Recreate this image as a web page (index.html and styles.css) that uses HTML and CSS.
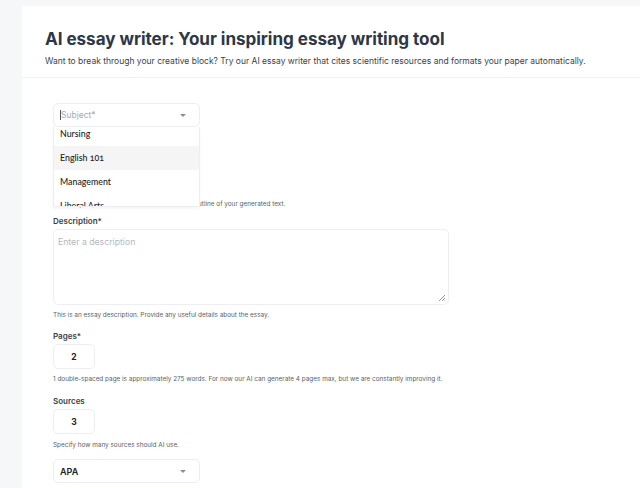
FILE: index.html
```html
<!DOCTYPE html>
<html>
<head>
<meta charset="utf-8">
<link rel="stylesheet" href="styles.css">
</head>
<body>
<div class="shell">
  <div class="topbar"></div>
  <div class="panel">
    <header class="head">
      <h1 class="title">AI essay writer: Your inspiring essay writing tool</h1>
      <p class="subtitle">Want to break through your creative block? Try our AI essay writer that cites scientific resources and formats your paper automatically.</p>
    </header>
    <form class="form">
      <div class="field subject-field">
        <div class="select">
          <span class="placeholder"><span class="caret"></span>Subject*</span>
          <span class="arrow"></span>
        </div>
        <ul class="menu">
          <li class="opt">Nursing</li>
          <li class="opt active">English 101</li>
          <li class="opt">Management</li>
          <li class="opt">Liberal Arts</li>
        </ul>
      </div>
      <div class="field title-field">
        <label class="label">Title*</label>
        <div class="input wide"></div>
        <p class="hint">The title you provide will be used to create the outline of your generated text.</p>
      </div>
      <div class="field desc-field">
        <label class="label">Description*</label>
        <div class="textarea"><span class="ph">Enter a description</span>
          <svg class="grip" width="8" height="8" viewBox="0 0 8 8"><path d="M7 1L1 7M7 4L4 7M7 6.5L6.5 7" stroke="#888" stroke-width="0.9" fill="none"/></svg>
        </div>
        <p class="hint">This is an essay description. Provide any useful details about the essay.</p>
      </div>
      <div class="field pages-field">
        <label class="label">Pages*</label>
        <div class="num">2</div>
        <p class="hint">1 double-spaced page is approximately 275 words. For now our AI can generate 4 pages max, but we are constantly improving it.</p>
      </div>
      <div class="field sources-field">
        <label class="label">Sources</label>
        <div class="num">3</div>
        <p class="hint">Specify how many sources should AI use.</p>
      </div>
      <div class="field style-field">
        <div class="select apa">
          <span class="value">APA</span>
          <span class="arrow"></span>
        </div>
      </div>
    </form>
  </div>
</div>
</body>
</html>
```
FILE: styles.css
```css
* { box-sizing: border-box; }
html, body { margin: 0; padding: 0; }
body {
  background: #f6f7f9;
  font-family: Inter, "Liberation Sans", sans-serif;
  color: #2d3748;
  width: 640px;
  height: 488px;
  overflow: hidden;
}
.shell { padding-left: 22px; }
.topbar { height: 6px; }
.panel {
  background: #fff;
  height: 482px;
}
.head {
  padding: 21px 23px 0 23px;
  height: 72px;
  border-bottom: 1px solid #f1f2f4;
}
.title {
  margin: 0;
  font-size: 17.1px;
  line-height: 24px;
  font-weight: 700;
  color: #2d3748;
  letter-spacing: -0.05px;
}
.subtitle {
  margin: 4px 0 0;
  font-size: 8.5px;
  line-height: 12px;
  color: #3a3f47;
}
.form {
  padding: 25px 0 0 31px;
  display: flex;
  flex-direction: column;
}
.field { position: relative; }
.select {
  width: 147px;
  height: 24px;
  border: 1px solid #eceef1;
  border-radius: 5px;
  display: flex;
  align-items: center;
  justify-content: space-between;
  padding: 0 13px 0 6px;
  background: #fff;
}
.placeholder {
  font-size: 8.5px;
  color: #a6abb3;
  display: flex;
  align-items: center;
}
.caret {
  width: 1px;
  height: 10px;
  background: #555;
}
.arrow {
  width: 0; height: 0;
  border-left: 3px solid transparent;
  border-right: 3px solid transparent;
  border-top: 3px solid #8a8f97;
}
.menu {
  position: absolute;
  left: 0;
  top: 24px;
  width: 147px;
  height: 80px;
  margin: 0;
  padding: 0;
  list-style: none;
  background: #fff;
  border: 1px solid #eceef1;
  border-top: none;
  overflow: hidden;
  z-index: 5;
  box-shadow: 0 2px 3px rgba(0,0,0,0.04);
}
.opt {
  height: 24px;
  line-height: 24px;
  padding-left: 6px;
  font-family: Lato, "Noto Sans", sans-serif;
  font-size: 8.8px;
  color: #222;
  font-weight: 500;
  font-variant-numeric: oldstyle-nums;
}
.menu .opt:first-child { margin-top: -5px; }
.opt.active { background: #f5f5f6; }
.label {
  display: block;
  font-size: 8px;
  line-height: 11px;
  font-weight: 600;
  color: #3a3f47;
  margin-bottom: 2px;
}
.input.wide {
  width: 147px;
  height: 24px;
  border: 1px solid #eceef1;
  border-radius: 5px;
}
.hint {
  margin: 6px 0 0;
  font-size: 6.4px;
  line-height: 9px;
  color: #5a5f66;
}
.title-field { margin-top: 31px; }
.title-field .hint { margin-top: 5px; }
.desc-field { margin-top: 7px; }
.textarea {
  position: relative;
  width: 396px;
  height: 76px;
  border: 1px solid #eceef1;
  border-radius: 5px;
  padding: 6px 4px 4px;
}
.ph {
  display: block;
  font-size: 8.7px;
  line-height: 12px;
  color: #b4b8be;
}
.grip { position: absolute; right: 2px; bottom: 2px; }
.pages-field { margin-top: 11px; }
.sources-field { margin-top: 12px; }
.pages-field .hint { margin-top: 6px; }
.sources-field .hint { margin-top: 7px; }
.style-field { margin-top: 9px; }
.num {
  width: 42px;
  height: 25px;
  border: 1px solid #eceef1;
  border-radius: 5px;
  display: flex;
  align-items: center;
  justify-content: center;
  font-size: 8.5px;
  font-weight: 700;
  color: #222;
}
.value {
  font-size: 9px;
  font-weight: 600;
  color: #222;
}
```
